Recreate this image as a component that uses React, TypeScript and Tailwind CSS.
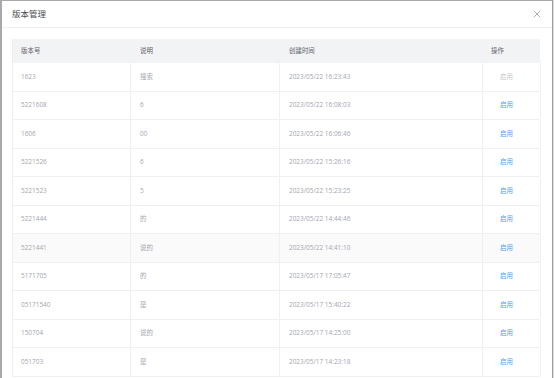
import { X } from 'lucide-react';

const rows = [
  { ver: '1623', desc: '搜索', time: '2023/05/22 16:23:43', disabled: true },
  { ver: '5221608', desc: '6', time: '2023/05/22 16:08:03' },
  { ver: '1606', desc: '00', time: '2023/05/22 16:06:46' },
  { ver: '5221526', desc: '6', time: '2023/05/22 15:26:16' },
  { ver: '5221523', desc: '5', time: '2023/05/22 15:23:25' },
  { ver: '5221444', desc: '的', time: '2023/05/22 14:44:46' },
  { ver: '5221441', desc: '说的', time: '2023/05/22 14:41:10', hover: true },
  { ver: '5171705', desc: '的', time: '2023/05/17 17:05:47' },
  { ver: '05171540', desc: '是', time: '2023/05/17 15:40:22' },
  { ver: '150704', desc: '说的', time: '2023/05/17 14:25:00' },
  { ver: '051703', desc: '是', time: '2023/05/17 14:23:18' },
];

export default function App() {
  return (
    <div
      className="w-[554px] h-[378px] overflow-hidden flex bg-white"
      style={{ fontFamily: '"Open Sans", "Noto Sans CJK SC", sans-serif' }}
    >
      <div className="flex-1 flex flex-col border-l-2 border-t border-[#a9a9a9] min-w-0">
        {/* Header */}
        <div className="h-[27px] shrink-0 flex items-center justify-between pl-[10px] pr-[9px] border-b border-[#eeeff2]">
          <span className="text-[8.5px] text-[#4a4c50]">版本管理</span>
          <X className="w-[12px] h-[12px] text-[#909399]" strokeWidth={1.5} />
        </div>

        {/* Table */}
        <div className="pt-[11px] pl-[10px]">
          <div className="w-[528px] border-l border-[#ebeef5] text-[6.45px]">
            <div className="grid grid-cols-[118px_149px_203px_58px] h-[24px] bg-[#f2f3f5] text-[#5f6268]">
              <div className="flex items-center pl-[8px]">版本号</div>
              <div className="flex items-center pl-[9px]">说明</div>
              <div className="flex items-center pl-[9px]">创建时间</div>
              <div className="flex items-center pl-[8px]">操作</div>
            </div>
            {rows.map((r) => (
              <div
                key={r.ver}
                className={`grid grid-cols-[118px_149px_203px_58px] h-[28.5px] border-b border-[#eef0f4] text-[#a3a7b0] ${
                  r.hover ? 'bg-[#fafafa]' : 'bg-white'
                }`}
              >
                <div className="flex items-center pl-[8px] border-r border-[#eef0f4]">{r.ver}</div>
                <div className="flex items-center pl-[9px] border-r border-[#eef0f4]">{r.desc}</div>
                <div className="flex items-center pl-[9px] border-r border-[#eef0f4]">{r.time}</div>
                <div className="flex items-center pl-[17px] border-r border-[#eef0f4]">
                  <span className={r.disabled ? 'text-[#c6c8cc]' : 'text-[#4f9df5]'}>启用</span>
                </div>
              </div>
            ))}
          </div>
        </div>
      </div>
      <div className="w-px bg-[#9e9e9e]" />
      <div className="w-px bg-[#dedede]" />
    </div>
  );
}
